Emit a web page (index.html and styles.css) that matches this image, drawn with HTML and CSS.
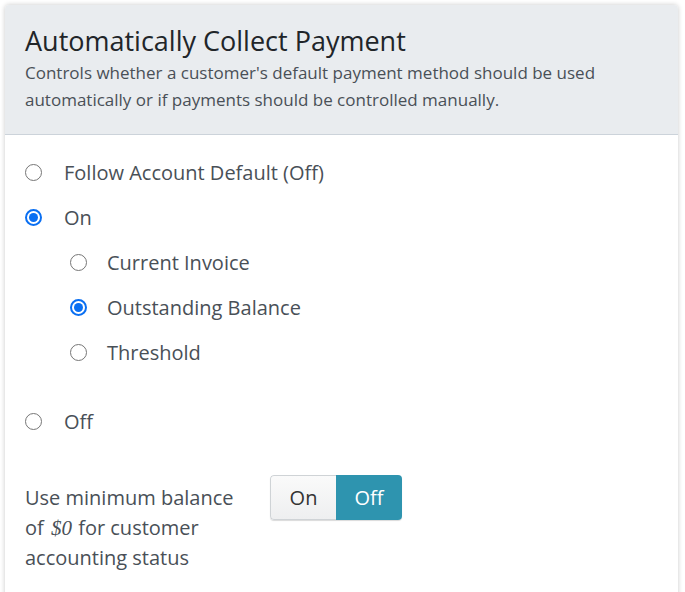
FILE: index.html
```html
<!DOCTYPE html>
<html>
<head>
<meta charset="utf-8">
<link rel="stylesheet" href="styles.css">
</head>
<body>
<div class="card">
  <div class="card-header">
    <h2 class="title">Automatically Collect Payment</h2>
    <p class="desc">Controls whether a customer's default payment method should be used automatically or if payments should be controlled manually.</p>
  </div>
  <div class="card-body">
    <label class="opt"><span class="radio"></span><span>Follow Account Default (Off)</span></label>
    <label class="opt"><span class="radio checked"></span><span>On</span></label>
    <div class="sub">
      <label class="opt"><span class="radio"></span><span>Current Invoice</span></label>
      <label class="opt"><span class="radio checked"></span><span>Outstanding Balance</span></label>
      <label class="opt"><span class="radio"></span><span>Threshold</span></label>
    </div>
    <label class="opt off"><span class="radio"></span><span>Off</span></label>
    <div class="setting">
      <div class="setting-label">Use minimum balance of <em class="amt">$0</em> for customer accounting status</div>
      <div class="toggle">
        <span class="tbtn">On</span>
        <span class="tbtn active">Off</span>
      </div>
    </div>
  </div>
</div>
</body>
</html>
```
FILE: styles.css
```css
* { box-sizing: border-box; }
html, body { margin: 0; padding: 0; background: #fff; }
body {
  padding: 5px 7px 0 5px;
  font-family: "Open Sans", "Noto Sans", sans-serif;
  color: #495057;
}
.card {
  background: #fff;
  border-radius: 4px 4px 0 0;
  box-shadow: 0 0 5px rgba(0,0,0,0.22);
  height: 600px;
  overflow: hidden;
}
.card-header {
  background: #e9ecef;
  border-bottom: 1px solid #ccd3da;
  padding: 19px 20px 0 20px;
  height: 130px;
}
.title {
  margin: 0;
  font-size: 27px;
  font-weight: 400;
  color: #212529;
  line-height: 34px;
}
.desc {
  margin: 1px 0 0;
  max-width: 610px;
  font-size: 17px;
  line-height: 27px;
  color: #495057;
}
.card-body {
  padding: 24px 20px 0 20px;
}
.opt {
  display: flex;
  align-items: center;
  height: 27px;
  margin-bottom: 18px;
  font-size: 20px;
  color: #495057;
}
.sub { padding-left: 45px; }
.sub .radio { margin-right: 20px; }
.opt.off { margin-top: 42px; margin-bottom: 40px; }
.radio {
  width: 17px;
  height: 17px;
  border: 1.5px solid #767676;
  border-radius: 50%;
  margin-right: 22px;
  flex: none;
  position: relative;
}
.radio.checked {
  border: 2px solid #0a6ff2;
}
.radio.checked::after {
  content: "";
  position: absolute;
  left: 2px; top: 2px;
  width: 9px; height: 9px;
  border-radius: 50%;
  background: #0a6ff2;
}
.setting {
  display: flex;
  align-items: flex-start;
}
.setting-label {
  width: 222px;
  margin-right: 23px;
  font-size: 20px;
  line-height: 30px;
  margin-top: 8px;
}
.amt {
  font-family: "Liberation Serif", serif;
  font-size: 21px;
  padding: 0 1px 0 2px;
}
.toggle {
  display: flex;
  height: 45px;
  border-radius: 4px;
  overflow: hidden;
  box-shadow: 0 1px 1px rgba(0,0,0,0.15);
}
.tbtn {
  display: flex;
  align-items: center;
  justify-content: center;
  width: 66px;
  font-size: 20px;
}
.tbtn:first-child {
  background: linear-gradient(#fafafa, #eeeff0);
  border: 1px solid #cfd3d6;
  border-right: none;
  border-radius: 4px 0 0 4px;
  color: #333;
}
.tbtn.active {
  background: #2e94af;
  color: #fff;
}
```
